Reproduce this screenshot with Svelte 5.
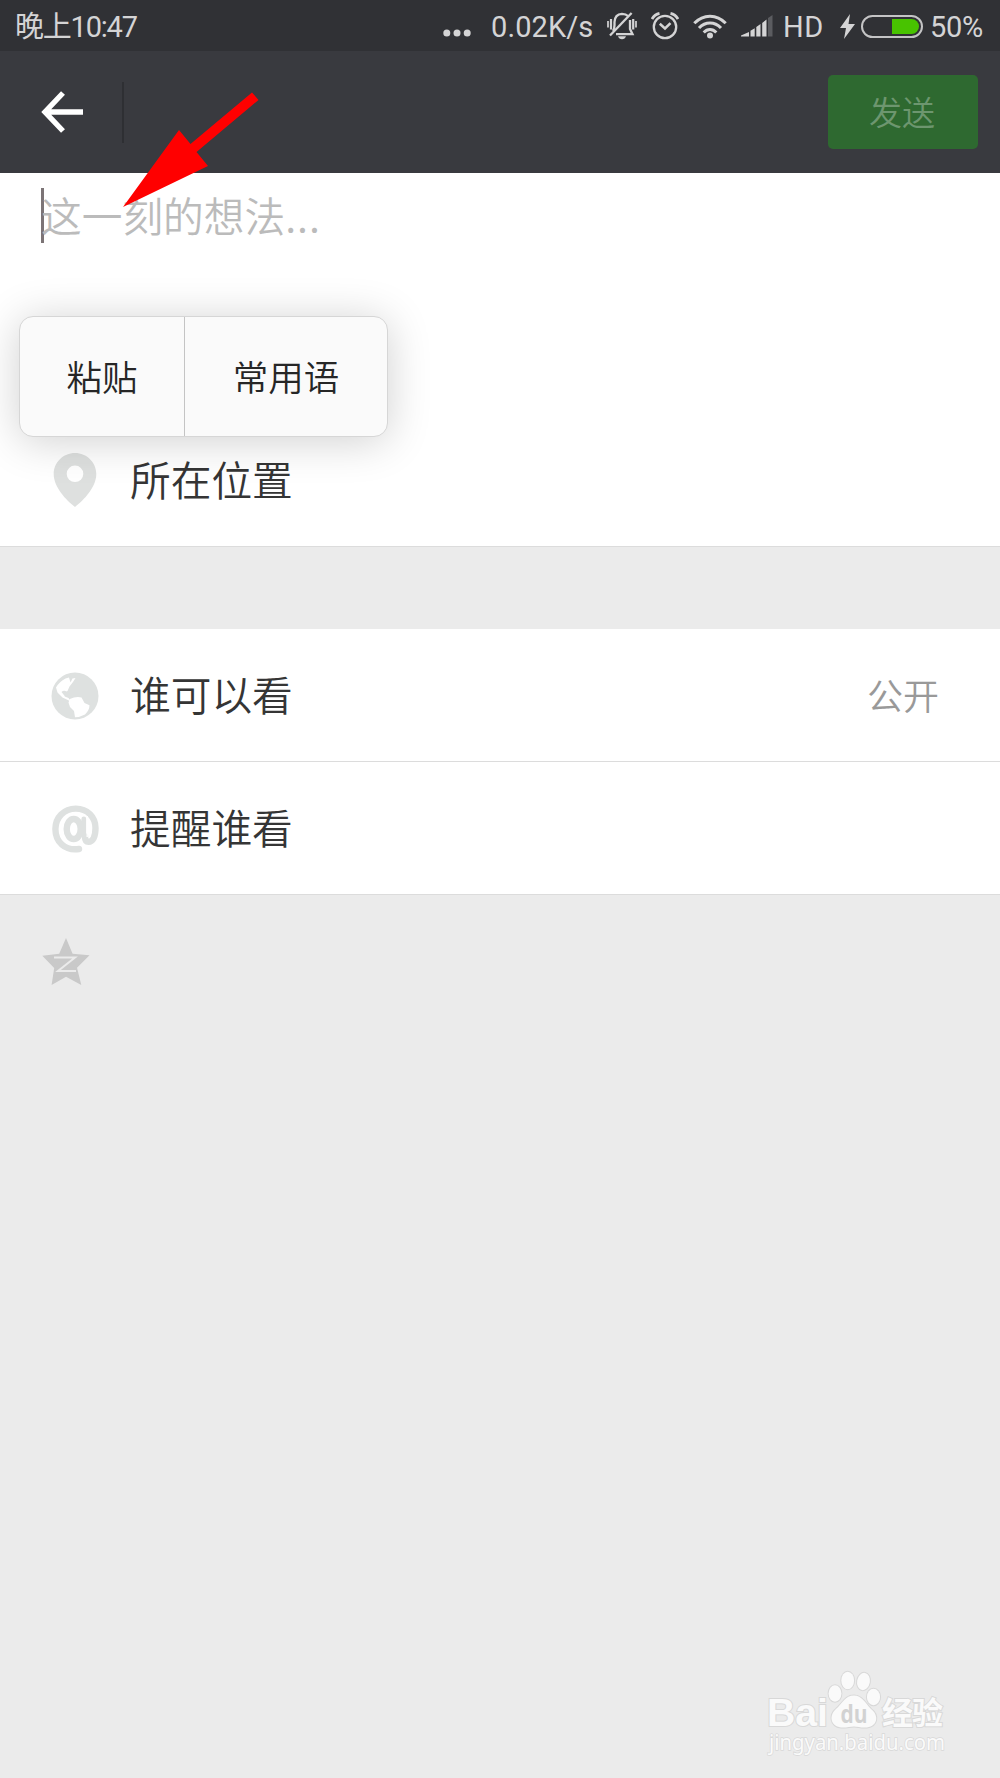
<script lang="ts">
    type Row = {
        icon: 'globe' | 'at';
        label: string;
        value?: string;
    };

    const rows: Row[] = [
        { icon: 'globe', label: '谁可以看', value: '公开' },
        { icon: 'at', label: '提醒谁看' },
    ];

    const menu = ['粘贴', '常用语'];
    const battery = 50;
</script>

<div class="screen">
    <div class="status">
        <span class="time">晚上10:47</span>
        <svg class="dots" width="28" height="10" viewBox="0 0 28 10">
            <circle cx="3.8" cy="5" r="3.5" />
            <circle cx="14" cy="5" r="3.5" />
            <circle cx="24.2" cy="5" r="3.5" />
        </svg>
        <span class="speed">0.02K/s</span>
        <svg class="bell" width="30" height="28" viewBox="0 0 30 28">
            <g fill="none" stroke="#d4d4d5" stroke-width="2.3">
                <path d="M6 19 Q7.5 17 7.5 13 V10 Q7.8 2.2 15 1.8 Q19 1.8 21 4" />
                <path d="M23 8 V17 L25.5 22.2 H9" />
                <path d="M24.6 1 L3 23.5" />
                <path d="M1 9 V15.5 M29 9 V15.5" stroke-width="1.7" />
                <path d="M4 7 V17.5 M26.2 7 V17.5" stroke-width="2.2" />
            </g>
            <path d="M11 24.3 H19 Q18 27.2 15 27.2 Q12 27.2 11 24.3Z" />
        </svg>
        <svg class="alarm" width="28" height="28" viewBox="0 0 28 28">
            <g fill="none" stroke="#d4d4d5" stroke-width="2.3">
                <circle cx="14" cy="15" r="11.2" />
                <path d="M8.8 11.8 L14 16.5 L19.5 11.2" stroke-width="2.5" />
                <path d="M1 7 Q3.5 2.5 8.5 1.4 M27 7 Q24.5 2.5 19.5 1.4" stroke-width="2.8" />
            </g>
        </svg>
        <svg class="wifi" width="34" height="25" viewBox="0 0 34 25">
            <g fill="none" stroke="#d4d4d5" stroke-width="3">
                <path d="M1.3 9.3 Q8 2.2 17 2.2 Q26 2.2 32.7 9.3" />
                <path d="M6 14 Q10.8 9 17 9 Q23.2 9 28 14" />
                <path d="M10.7 18.5 Q13.5 15.5 17 15.5 Q20.5 15.5 23.3 18.5" />
            </g>
            <circle cx="17" cy="21.5" r="3" />
        </svg>
        <svg class="signal" width="32" height="22" viewBox="0 0 32 22">
            <path d="M0 21.5 V20.5 L8 17 V21.5Z M9.5 21.5 V15.8 L13.7 13.2 V21.5Z M15.3 21.5 V12 L19.5 9 V21.5Z M21.2 21.5 V8 L25.5 4.5 V21.5Z" />
            <path d="M27 21.5 V3 L31.5 0 V21.5Z" fill="#5b5c60" />
        </svg>
        <span class="hd">HD</span>
        <svg class="bolt" width="15" height="25" viewBox="0 0 15 25">
            <path d="M10 0 L0 14 H6 L4 25 L15 10 H8.5Z" />
        </svg>
        <div class="battery"><div class="level" style="width: {battery}%"></div></div>
        <span class="percent">{battery}%</span>
    </div>

    <header>
        <svg class="back" width="42" height="42" viewBox="0 0 42 42">
            <path d="M22 2 L4 21 L22 40 M4 21 H42" fill="none" stroke="#fff" stroke-width="5.4" />
        </svg>
        <div class="divider"></div>
        <button class="send">发送</button>
    </header>

    <div class="compose">
        <div class="caret"></div>
        <span class="placeholder">这一刻的想法<span class="ellipsis">...</span></span>
    </div>

    <div class="row">
        <div class="icon">
            <svg width="44" height="56" viewBox="0 0 44 56">
                <path
                    d="M22 1 C33.8 1 43.3 10.5 43.3 22 C43.3 35 31 48 22 55 C13 48 0.7 35 0.7 22 C0.7 10.5 10.2 1 22 1Z M22 13.5 A8.3 8.3 0 1 0 22 30.1 A8.3 8.3 0 1 0 22 13.5Z"
                    fill="#dee0df"
                    fill-rule="evenodd"
                />
            </svg>
        </div>
        <span class="label">所在位置</span>
    </div>

    <div class="gap"></div>

    {#each rows as row}
        <div class="row">
            <div class="icon">
                {#if row.icon === 'globe'}
                    <svg width="48" height="50" viewBox="0 -2 48 50">
                        <circle cx="24" cy="24" r="23.5" fill="#dee1e0" />
                        <path
                            d="M14.5 6.5 L18 5.5 L19.5 10.5 L21.5 6.5 L24.5 6 L22 10 L18.5 14.5 L16.5 19 L13.5 20.5 L13.7 24.5 L17.5 26 L20 29.5 L17.8 28.5 L11.5 25.5 L6.5 20.5 L5 15.5 Q8.5 9.5 14.5 6.5Z"
                            fill="#fff"
                        />
                        <path
                            d="M18.8 27 Q25 24.2 30.5 25.5 L33.5 31 L38.5 33.2 Q38.5 38 34 42.5 Q29 45.2 24 45.2 L23 39 L19 35 L17.5 30.5Z"
                            fill="#fff"
                        />
                        <path d="M10.5 20 Q13 17.5 16 20 L17 24 L13.5 23.8Z" fill="#dee1e0" />
                    </svg>
                {:else}
                    <svg width="48" height="50" viewBox="-1 -2 48 50">
                        <g fill="none" stroke="#dee1e0" stroke-linecap="round">
                            <path
                                d="M27 44 C13 46 3.4 37 3.4 24 C3.4 12.5 12 3.6 23.8 3.6 C35.5 3.6 43.5 12 43.5 23 C43.5 31.5 41 36.8 36.5 36.8 C34.2 36.8 33 35 33 31.5"
                                stroke-width="6.4"
                            />
                            <path d="M31.8 14 V31" stroke-width="4.8" />
                            <ellipse cx="21.7" cy="24" rx="7" ry="10" stroke-width="6.4" />
                        </g>
                        <path d="M35.2 11 V32" stroke="#fff" stroke-width="1.3" />
                    </svg>
                {/if}
            </div>
            <span class="label">{row.label}</span>
            {#if row.value}
                <span class="value">{row.value}</span>
            {/if}
        </div>
    {/each}

    <div class="share">
        <svg width="48" height="48" viewBox="0 0 48 48">
            <path
                d="M24 0 L30.6 15.8 L47.5 17.3 L35 29.8 L39.3 47 L24 38.7 L9.6 47 L12.2 30 L0.3 17.7 L17.2 15.8Z"
                fill="#c9c9c9"
            />
            <path d="M12 19.5 H33 L16 33 H34" fill="none" stroke="#ebebeb" stroke-width="2" />
        </svg>
    </div>

    <div class="popup">
        {#each menu as item}
            <span class="item">{item}</span>
        {/each}
    </div>

    <svg class="pointer" width="140" height="120" viewBox="0 0 140 120">
        <path d="M3 117 L59 40 L70.5 54 L132 2.5 L138.5 10 L76.5 62 L88 76Z" fill="#f00" />
    </svg>

    <svg class="watermark" width="200" height="96" viewBox="0 0 200 96">
        <g class="mark">
            <ellipse cx="70" cy="25.5" rx="6.4" ry="8.2" />
            <ellipse cx="82.7" cy="12.5" rx="6.4" ry="8.7" />
            <ellipse cx="98.5" cy="13.5" rx="6.4" ry="8.7" transform="rotate(10 98.5 13.5)" />
            <ellipse cx="108.5" cy="29" rx="6.6" ry="8.2" />
            <path d="M89 27.5 C97 27.5 100 35 106 41 C114 47 113 58 102 59.5 C96 60 93 58.5 89 58.5 C85 58.5 81 60 76 59.5 C65 58 64 47 71 41 C78 35 80 27.5 89 27.5Z" />
            <text class="bai" x="2" y="58" textLength="61" lengthAdjust="spacingAndGlyphs">Bai</text>
            <text class="cjk" x="117" y="56" textLength="61">经验</text>
            <text class="url" x="4" y="82" textLength="176" lengthAdjust="spacingAndGlyphs">jingyan.baidu.com</text>
        </g>
        <text class="du" x="75.5" y="55" textLength="27" lengthAdjust="spacingAndGlyphs">du</text>
    </svg>
</div>

<style>
    :global(body) {
        margin: 0;
        background: #ebebeb;
    }

    .screen {
        position: relative;
        display: flex;
        flex-direction: column;
        width: 1000px;
        height: 1778px;
        overflow: hidden;
        background: #ebebeb;
        color: #353535;
        font-family: 'Noto Sans CJK SC', sans-serif;
        font-weight: 350;
        white-space: nowrap;
    }

    .status {
        display: flex;
        align-items: center;
        box-sizing: border-box;
        height: 51px;
        padding: 1px 0 0 15px;
        background: #303135;
        color: #d4d4d5;
        fill: #d4d4d5;
        font-family: Roboto, 'Noto Sans CJK SC', sans-serif;
        font-size: 29px;
        font-weight: 400;
        line-height: 46px;
    }

    .status > * {
        flex-shrink: 0;
    }

    .status span {
        padding-top: 2px;
    }

    .time {
        width: 428px;
        letter-spacing: -1.2px;
    }

    .dots {
        margin: 14px 20px 0 0;
    }

    .speed {
        width: 116px;
        letter-spacing: 0.1px;
    }

    .bell {
        margin-right: 14px;
    }

    .alarm {
        margin-right: 14px;
    }

    .wifi {
        margin-right: 14px;
    }

    .signal {
        margin-right: 10px;
    }

    .hd {
        width: 57px;
        letter-spacing: 0.6px;
    }

    .bolt {
        margin-right: 6px;
    }

    .battery {
        display: flex;
        justify-content: flex-end;
        box-sizing: border-box;
        width: 62px;
        height: 23px;
        padding: 2px;
        border: 2px solid #c4c4c5;
        border-radius: 12px;
    }

    .level {
        background: #48c300;
        border-radius: 0 8px 8px 0;
    }

    .percent {
        margin-left: 7px;
        letter-spacing: -0.3px;
    }

    header {
        display: flex;
        align-items: center;
        box-sizing: border-box;
        height: 122px;
        padding: 0 22px 0 41px;
        background: #393a3f;
    }

    .divider {
        width: 2px;
        height: 61px;
        margin-left: 39px;
        background: #2e2f33;
    }

    .send {
        width: 150px;
        height: 74px;
        margin-left: auto;
        padding: 0 2px 2px 0;
        border: 0;
        border-radius: 5px;
        background: #2e6930;
        color: #6d966f;
        font: inherit;
        font-size: 33px;
    }

    .compose {
        display: flex;
        align-items: flex-start;
        box-sizing: border-box;
        height: 241px;
        padding: 15px 0 0 41px;
        background: #fff;
    }

    .caret {
        width: 3px;
        height: 55px;
        background: #7c7476;
    }

    .placeholder {
        margin-left: -3px;
        color: #bbb;
        font-size: 40.7px;
        line-height: 53px;
    }

    .ellipsis {
        letter-spacing: 1px;
    }

    .row {
        display: flex;
        align-items: center;
        box-sizing: border-box;
        height: 133px;
        padding-right: 61px;
        border-bottom: 1px solid #dcdcdc;
        background: #fff;
    }

    .icon {
        display: flex;
        justify-content: center;
        width: 150px;
        margin-right: -20px;
    }

    .label {
        padding-bottom: 3px;
        font-size: 40.7px;
    }

    .value {
        margin-left: auto;
        padding-bottom: 2px;
        color: #999;
        font-size: 36px;
    }

    .gap {
        height: 82px;
    }

    .share {
        padding: 43px 42px;
    }

    .popup {
        position: absolute;
        top: 316px;
        left: 19px;
        display: flex;
        box-sizing: border-box;
        width: 369px;
        height: 121px;
        border: 1px solid #d6d6d6;
        border-radius: 14px;
        background: #fafafa;
        box-shadow: 0 4px 44px rgba(0, 0, 0, 0.19);
        color: #262626;
        font-size: 35.5px;
        line-height: 117px;
        text-align: center;
    }

    .item {
        flex: 1;
    }

    .item:first-child {
        flex: 0 0 164px;
        border-right: 1px solid #c4c4c4;
    }

    .pointer {
        position: absolute;
        top: 90px;
        left: 120px;
    }

    .watermark {
        position: absolute;
        top: 1668px;
        left: 765px;
        font-family: 'Open Sans', sans-serif;
    }

    .mark {
        fill: #fafafa;
        stroke: #d8d8d8;
        stroke-width: 2px;
        paint-order: stroke;
    }

    .bai {
        font-family: 'Liberation Sans', sans-serif;
        font-size: 38px;
        font-weight: 700;
    }

    .cjk {
        font-family: 'Noto Sans CJK SC', sans-serif;
        font-size: 31px;
        font-weight: 700;
    }

    .url {
        font-family: 'Noto Sans', sans-serif;
        font-size: 21px;
        font-weight: 400;
        stroke-width: 1.4px;
    }

    .du {
        fill: #d2d2d2;
        font-size: 25px;
        font-weight: 700;
    }
</style>
